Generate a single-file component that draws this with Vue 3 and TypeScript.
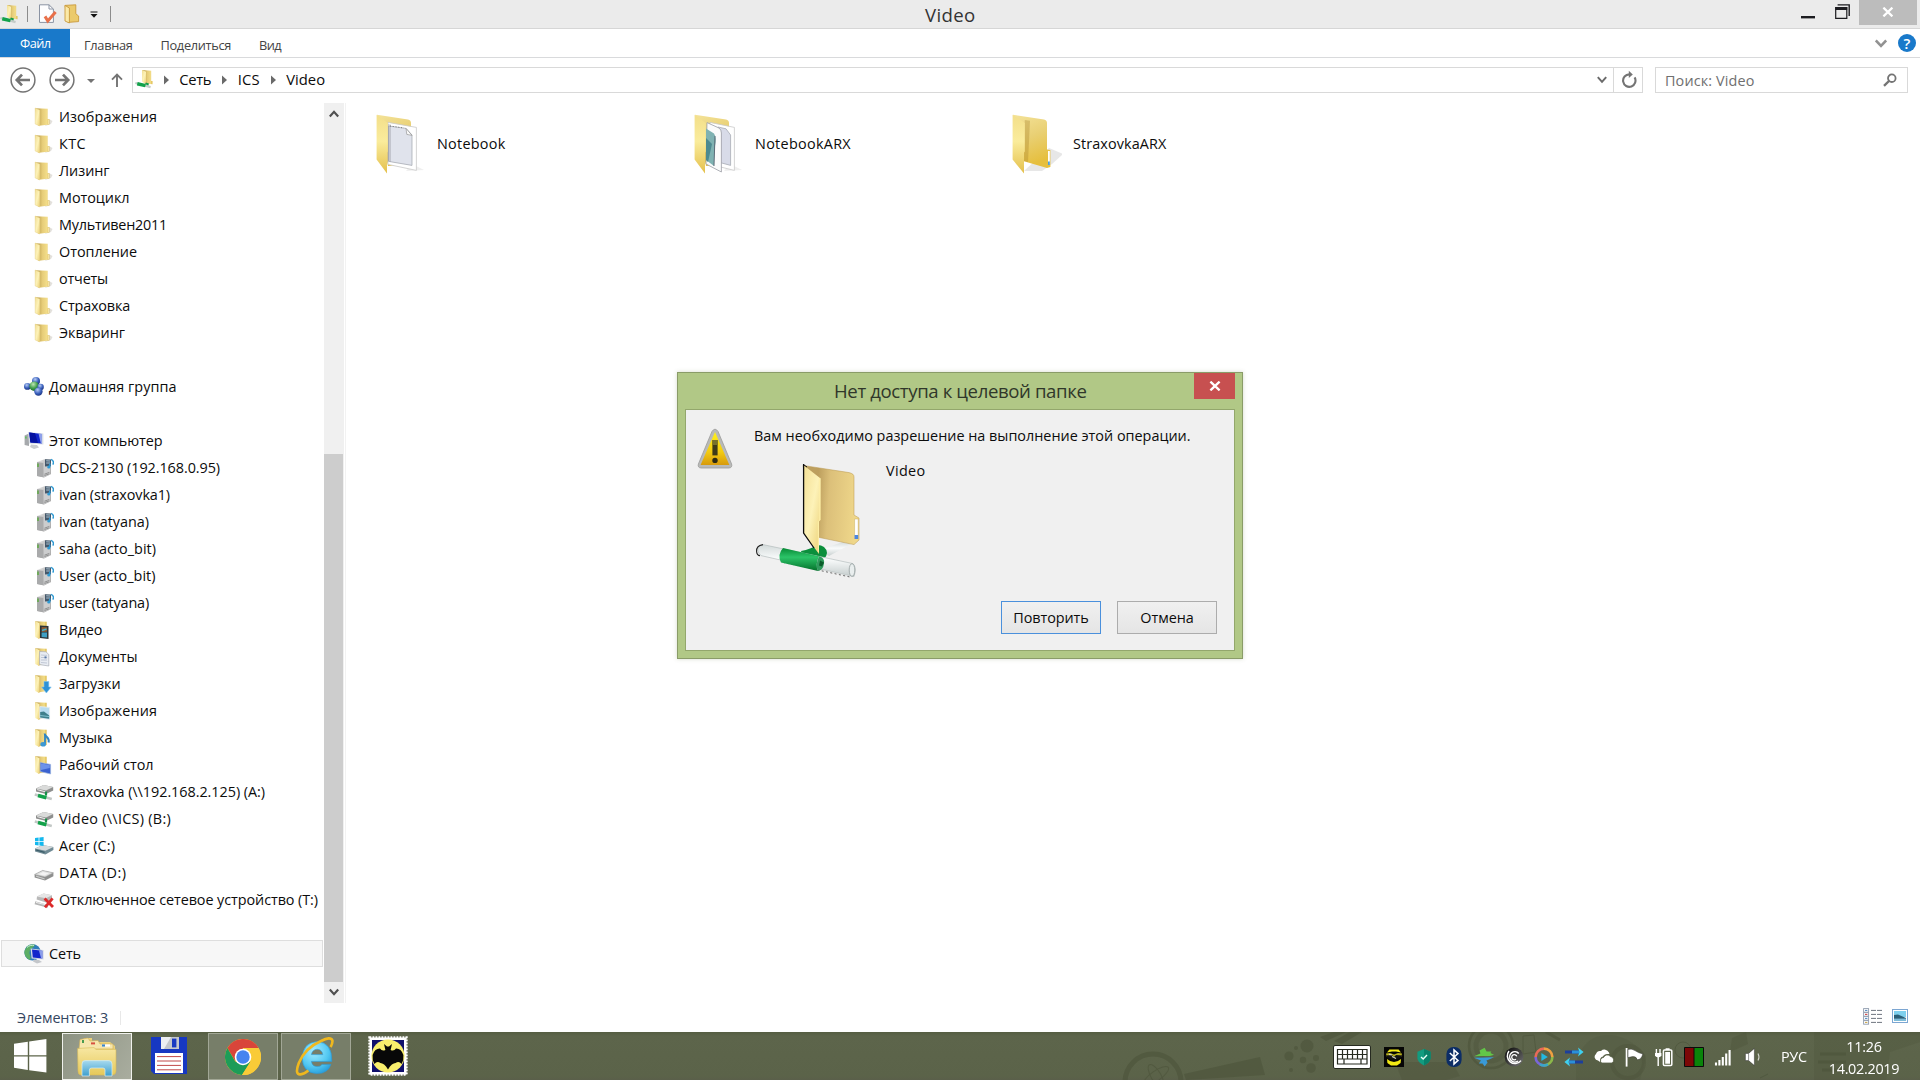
<script setup lang="ts">
import type { Directive } from 'vue'

interface Row {
  text: string
  w: number
  icon: string
  root?: boolean
  selected?: boolean
}

// Spreads the letters of a label so that it fills its designed width.
const vFit: Directive<HTMLElement, number> = {
  mounted(el, binding) {
    const natural = el.getBoundingClientRect().width
    const count = (el.textContent ?? '').length
    if (count) el.style.letterSpacing = `${(binding.value - natural) / count}px`
  },
}

const blank: Row = { text: '', w: 0, icon: '' }
const rows: Row[] = [
  { text: 'Изображения', w: 98, icon: 'folder' },
  { text: 'КТС', w: 27, icon: 'folder' },
  { text: 'Лизинг', w: 50.5, icon: 'folder' },
  { text: 'Мотоцикл', w: 70.5, icon: 'folder' },
  { text: 'Мультивен2011', w: 108, icon: 'folder' },
  { text: 'Отопление', w: 78, icon: 'folder' },
  { text: 'отчеты', w: 49, icon: 'folder' },
  { text: 'Страховка', w: 71, icon: 'folder' },
  { text: 'Экваринг', w: 66, icon: 'folder' },
  blank,
  { text: 'Домашняя группа', w: 127.5, icon: 'homegroup', root: true },
  blank,
  { text: 'Этот компьютер', w: 113.5, icon: 'computer', root: true },
  { text: 'DCS-2130 (192.168.0.95)', w: 161, icon: 'server' },
  { text: 'ivan (straxovka1)', w: 111, icon: 'server' },
  { text: 'ivan (tatyana)', w: 90, icon: 'server' },
  { text: 'saha (acto_bit)', w: 97, icon: 'server' },
  { text: 'User (acto_bit)', w: 96.5, icon: 'server' },
  { text: 'user (tatyana)', w: 90, icon: 'server' },
  { text: 'Видео', w: 43.5, icon: 'f-video' },
  { text: 'Документы', w: 78.5, icon: 'f-docs' },
  { text: 'Загрузки', w: 61.5, icon: 'f-down' },
  { text: 'Изображения', w: 98, icon: 'f-pics' },
  { text: 'Музыка', w: 53.5, icon: 'f-music' },
  { text: 'Рабочий стол', w: 94.5, icon: 'f-desk' },
  { text: 'Straxovka (\\\\192.168.2.125) (A:)', w: 206, icon: 'netdrive' },
  { text: 'Video (\\\\ICS) (B:)', w: 112, icon: 'netdrive' },
  { text: 'Acer (C:)', w: 56, icon: 'sysdrive' },
  { text: 'DATA (D:)', w: 67.5, icon: 'drive' },
  { text: 'Отключенное сетевое устройство (T:)', w: 259, icon: 'offdrive' },
  blank,
  { text: 'Сеть', w: 32, icon: 'network', root: true, selected: true },
]

const crumbs = [
  { text: 'Сеть', w: 32 },
  { text: 'ICS', w: 22 },
  { text: 'Video', w: 39 },
]

const folders = [
  { text: 'Notebook', w: 68.5, icon: 'big-notebook' },
  { text: 'NotebookARX', w: 96, icon: 'big-stack' },
  { text: 'StraxovkaARX', w: 93.5, icon: 'big-plain' },
]

const tray = ['t-bat', 't-shield', 't-bt', 't-bird', 't-spiral', 't-play', 't-sync', 't-cloud', 't-flag', 't-power', 't-meter', 't-signal', 't-sound']
</script>

<template>
  <div class="screen">
    <svg class="defs" aria-hidden="true">
      <defs>
        <linearGradient id="gFlap" x1="0" y1="0" x2="1" y2="1"><stop offset="0" stop-color="#f3df94" /><stop offset=".5" stop-color="#fdf2b8" /><stop offset="1" stop-color="#ecd074" /></linearGradient>
        <linearGradient id="gBack" x1="0" y1="0" x2="1" y2="0"><stop offset=".28" stop-color="#c9ac58" /><stop offset=".5" stop-color="#e6cc78" /><stop offset=".8" stop-color="#f2dc88" /><stop offset="1" stop-color="#dcb844" /></linearGradient>
        <linearGradient id="gBigBack" x1="0" y1="0" x2="1" y2=".1"><stop offset=".28" stop-color="#bd9f5e" /><stop offset=".5" stop-color="#dcc07a" /><stop offset="1" stop-color="#efd78a" /></linearGradient>
        <linearGradient id="gPlainBack" x1="0" y1="0" x2=".3" y2="1"><stop offset="0" stop-color="#f4e39a" /><stop offset=".5" stop-color="#e9d074" /><stop offset="1" stop-color="#e6bf3e" /></linearGradient>
        <linearGradient id="gBigFlap" x1="0" y1="0" x2="0" y2="1"><stop offset="0" stop-color="#f3df8a" /><stop offset=".45" stop-color="#faec9c" /><stop offset="1" stop-color="#e4c04c" /></linearGradient>
        <linearGradient id="gGrey" x1="0" y1="0" x2="1" y2="1"><stop offset="0" stop-color="#e8e8e8" /><stop offset="1" stop-color="#8f8f8f" /></linearGradient>
        <linearGradient id="gGreen" x1="0" y1="0" x2="0" y2="1"><stop offset="0" stop-color="#078a36" /><stop offset=".4" stop-color="#2cc468" /><stop offset="1" stop-color="#04702a" /></linearGradient>
        <linearGradient id="gGlass" x1="0" y1="0" x2="0" y2="1"><stop offset="0" stop-color="#d3dada" /><stop offset=".45" stop-color="#fafcfc" /><stop offset="1" stop-color="#c4cccc" /></linearGradient>
        <linearGradient id="gWarn" x1="0" y1="0" x2="0" y2="1"><stop offset="0" stop-color="#fff21a" /><stop offset=".6" stop-color="#f3cb12" /><stop offset="1" stop-color="#d79a0c" /></linearGradient>
        <linearGradient id="gFront" x1="0" y1="0" x2="0" y2="1"><stop offset="0" stop-color="#f7e7a2" /><stop offset="1" stop-color="#e6c95a" /></linearGradient>
        <linearGradient id="gTray" x1="0" y1="0" x2="0" y2="1"><stop offset="0" stop-color="#a6d9ee" /><stop offset="1" stop-color="#3d9fce" /></linearGradient>
        <radialGradient id="gIE" cx=".4" cy=".3" r=".8"><stop offset="0" stop-color="#a5ecff" /><stop offset=".6" stop-color="#52c8f2" /><stop offset="1" stop-color="#2093d4" /></radialGradient>
        <radialGradient id="gBlueBall" cx=".4" cy=".3" r=".7"><stop offset="0" stop-color="#b8ccf4" /><stop offset=".6" stop-color="#3c62be" /><stop offset="1" stop-color="#1c3684" /></radialGradient>
        <radialGradient id="gGreenBall" cx=".4" cy=".3" r=".7"><stop offset="0" stop-color="#bfe8b4" /><stop offset=".6" stop-color="#3f9c4a" /><stop offset="1" stop-color="#1f6a30" /></radialGradient>
        <linearGradient id="gDeep" x1="0" y1="0" x2="1" y2="1"><stop offset="0" stop-color="#060606" /><stop offset="1" stop-color="#777" /></linearGradient>
      </defs>

      <symbol id="folder" viewBox="0 0 20 20">
        <path d="M11 19 15 12 18.5 14 17 17Z" fill="#d5d3cc" opacity=".7" />
        <path d="M1.2 1.2 13.6 1.8V12.2H15.4V17.6L7 18.6H4Z" fill="url(#gBack)" />
        <path d="M1.2 1 5.8 3.2V19L1.2 17Z" fill="url(#gFlap)" stroke="#e6d28a" stroke-width=".5" />
        <path d="M14.3 12.8V17.2" stroke="#fff6d0" stroke-width=".8" />
      </symbol>
      <symbol id="f-video" viewBox="0 0 20 20">
        <path d="M1.2 1.2 12.6 1.8V17L4 18.6Z" fill="url(#gBack)" /><path d="M1.2 1 5.4 3.2V19L1.2 17Z" fill="url(#gFlap)" />
        <path d="M6 5.5 14.5 6V19L6 18Z" fill="#2c3438" /><path d="M7.6 7 13 7.2V11.8L7.6 12Z" fill="#8c5a34" /><path d="M7.6 12.6 13 12.6V17.6L7.6 17Z" fill="#3f9fc4" /><path d="M8 10.5 12.5 9" stroke="#48b0c8" stroke-width="1.4" />
      </symbol>
      <symbol id="f-docs" viewBox="0 0 20 20">
        <path d="M1.2 1.2 12.6 1.8V17L4 18.6Z" fill="url(#gBack)" /><path d="M1.2 1 5.4 3.2V19L1.2 17Z" fill="url(#gFlap)" />
        <path d="M5.6 4.5 12 4.8 14.8 7.5V19L5.6 17.6Z" fill="#e9edf3" stroke="#a9aeb8" stroke-width=".7" /><path d="M7 8 13 8.4M7 10.5H13M7 13H13M7 15.5 13 16" stroke="#a4acc0" stroke-width=".6" /><path d="M10.5 9.4H12.5V11.4H10.5Z" fill="#5878a8" />
      </symbol>
      <symbol id="f-down" viewBox="0 0 20 20">
        <path d="M1.2 1.2 12.6 1.8V17L4 18.6Z" fill="url(#gBack)" /><path d="M1.2 1 5.4 3.2V19L1.2 17Z" fill="url(#gFlap)" />
        <path d="M10 7.5H14.8V13H17.2L12.4 19 7.6 13H10Z" fill="#2f92d6" stroke="#7cc2ec" stroke-width=".6" />
      </symbol>
      <symbol id="f-pics" viewBox="0 0 20 20">
        <path d="M1.2 1.2 12.6 1.8V17L4 18.6Z" fill="url(#gBack)" /><path d="M1.2 1 5.4 3.2V19L1.2 17Z" fill="url(#gFlap)" />
        <path d="M5.8 5.6 15.6 6.4V18.4L5.8 17.2Z" fill="#b8dcf0" stroke="#e9eef2" stroke-width=".8" /><path d="M6.2 11 10 10.4 15.2 14.5V17.8L6.2 16.6Z" fill="#3f7f8c" /><path d="M6.2 14.5 15.2 15.6" stroke="#8fd0e0" stroke-width=".8" />
      </symbol>
      <symbol id="f-music" viewBox="0 0 20 20">
        <path d="M1.2 1.2 12.6 1.8V17L4 18.6Z" fill="url(#gBack)" /><path d="M1.2 1 5.4 3.2V19L1.2 17Z" fill="url(#gFlap)" />
        <path d="M10.6 5.5C11 9 16 9.5 14.6 14.5" fill="none" stroke="#2f86c4" stroke-width="2" /><path d="M11 6V16" stroke="#2f86c4" stroke-width="1.8" /><ellipse cx="9.2" cy="16.2" rx="2.8" ry="2.3" fill="#3c98d4" />
      </symbol>
      <symbol id="f-desk" viewBox="0 0 20 20">
        <path d="M1.2 1.2 12.6 1.8V17L4 18.6Z" fill="url(#gBack)" /><path d="M1.2 1 5.4 3.2V19L1.2 17Z" fill="url(#gFlap)" />
        <path d="M6.2 7.6 16.6 9.4V19L6.2 16.6Z" fill="#3b62d0" stroke="#9cb4e0" stroke-width=".7" /><path d="M7 8.6 15.8 10V13L7 15Z" fill="#6c92ea" />
      </symbol>
      <symbol id="homegroup" viewBox="0 0 20 20">
        <circle cx="12" cy="4" r="4" fill="url(#gBlueBall)" /><circle cx="3.4" cy="9.4" r="3.4" fill="url(#gBlueBall)" /><circle cx="10.2" cy="9.2" r="4.8" fill="url(#gGreenBall)" /><circle cx="16.6" cy="10" r="3.2" fill="url(#gBlueBall)" /><circle cx="14.4" cy="14.6" r="4.2" fill="url(#gBlueBall)" />
      </symbol>
      <symbol id="computer" viewBox="0 0 20 20">
        <path d="M.6 4.5 5 2.5V15L.6 14Z" fill="#a6a9ac" /><path d="M1.4 5.5H2.4V7.5H1.4Z" fill="#3c3" />
        <path d="M4 1 19.4 2.4V13.6L5 12.4Z" fill="#d7dde6" /><path d="M5.2 1.6 18 3V12.4L6.4 11.4Z" fill="#1226cc" /><path d="M5.2 1.6 11 2.2 14 12.1 6.4 11.4Z" fill="#0512a0" /><path d="M14.5 2.6 18 3V12.4L16.8 12.3Z" fill="#b8caf4" opacity=".75" /><path d="M7 13.6 13 14 15 16.6 10 18 6 16Z" fill="#c9ccd0" />
      </symbol>
      <symbol id="server" viewBox="0 0 20 20">
        <path d="M3 4 11 1 17 3V16L10 19.4 3 18Z" fill="url(#gGrey)" /><path d="M3 4 9.6 5V19.3L3 18Z" fill="#a9aaab" /><path d="M9.6 5 16.4 3.4V16.4L9.6 19.2Z" fill="#cccdce" />
        <path d="M4 5.6V9" stroke="#58a83a" stroke-width="1.4" /><path d="M10.4 16.2 15.4 14.4M10.4 17.6 15.4 15.8" stroke="#777" stroke-width=".7" />
        <path d="M11 1.2 17 1.6V8L11 8.4Z" fill="#46586a" /><path d="M12.2 2.8 16 3M12.2 5H16" stroke="#c7dfec" stroke-width=".8" /><path d="M16.8 1.4C20 2.4 19.8 5 18.8 6.6M15.8 5.4V9" fill="none" stroke="#2e9ad4" stroke-width="1.5" /><circle cx="14.8" cy="9" r="1.6" fill="#2e9ad4" />
      </symbol>
      <symbol id="drive" viewBox="0 0 20 20">
        <path d="M.6 11.4 8.6 7.4 19.4 9.8V13.2L11 17.6.6 14.4Z" fill="#8e8f8e" /><path d="M.6 11.4 8.6 7.4 19.4 9.8 11 14Z" fill="#dfe0df" stroke="#9c9d9c" stroke-width=".5" /><path d="M2 12.6 10.6 15.2V16.4L2 13.8Z" fill="#c9cac9" /><path d="M4.5 11.2 9 9 15 10.3 10.6 12.4Z" fill="#f4f4f4" />
      </symbol>
      <symbol id="netdrive" viewBox="0 0 20 20">
        <path d="M2 6.4 9.6 3 19.2 5V8.6L12 12 2 9.4Z" fill="#8e8f8e" /><path d="M2 6.4 9.6 3 19.2 5 12 8.6Z" fill="#dadbda" /><path d="M3.2 7.6 11.4 9.8" stroke="#f2f2f2" />
        <path d="M12 9.6V13.6" stroke="#189048" stroke-width="2.2" /><path d="M.8 12.4 17.8 17" stroke="#c3c8c6" stroke-width="2.6" /><path d="M4 13.6 12.4 15.8" stroke="#12a24a" stroke-width="3.6" />
      </symbol>
      <symbol id="sysdrive" viewBox="0 0 20 20">
        <path d="M1 12.6 8.6 9 19.4 11V14L11.4 18.4 1 15.6Z" fill="#6f8a94" /><path d="M1 12.6 8.6 9 19.4 11 11.4 14.8Z" fill="#d5dadc" /><path d="M2 14 10.6 16.4" stroke="#3a5c68" stroke-width="1.2" />
        <path d="M1 2 4.6 1.6V5.2H1ZM5.4 1.5 9.6 1V5.2H5.4ZM1 6H4.6V9.4L1 9ZM5.4 6H9.6V10L5.4 9.5Z" fill="#14b8ee" />
      </symbol>
      <symbol id="offdrive" viewBox="0 0 20 20">
        <path d="M3 6.4 9.6 3.6 18 5.2V10L12 12.4 2.6 9.6Z" fill="#b9b9b9" /><path d="M3 6.4 9.6 3.6 18 5.2 12 8.2Z" fill="#e6e6e6" /><path d="M1 12.8 14 16.4" stroke="#b5b5b5" stroke-width="3" /><path d="M2 12.4 11 14.6" stroke="#ededed" />
        <path d="M10.6 8.4 19 17M18.6 8.4 11 17.4" stroke="#dc2a2a" stroke-width="2.8" />
      </symbol>
      <symbol id="network" viewBox="0 0 20 20">
        <circle cx="8.6" cy="8.4" r="8.2" fill="#2f7cba" /><path d="M3 2.6C6 0 9 .4 11 .8 10 4 6 4 5.6 8 5 11 8 13 6 16 2 14.6-.4 10 .6 6.6Z" fill="#5cae64" /><path d="M3 3.4C5 1.4 8 1 10 1.4" stroke="#c9f0d8" fill="none" />
        <path d="M6.6 4.6 19.6 6V15.6L7.6 14.6Z" fill="#d4dae6" /><path d="M8 5.6 18.4 6.8V14.4L8.8 13.6Z" fill="#1226cc" /><path d="M15 6.4 18.4 6.8V14.4L17 14.2Z" fill="#a9bcf2" opacity=".8" /><path d="M10 15.6 15 16 18 18 13 19.6 9 17.6Z" fill="#c3c6ca" />
      </symbol>
      <symbol id="netfolder" viewBox="0 0 20 20">
        <path d="M7.4.6 17 1.2V12H18.4V15.6L10 14.6Z" fill="url(#gBack)" /><path d="M7.4.4 11.6 2.4V15.6L7.4 12.8Z" fill="url(#gFlap)" />
        <path d="M.4 14.2 16.4 18.6" stroke="#c4cbc8" stroke-width="2.4" /><path d="M2.4 15 11 17" stroke="#12a24a" stroke-width="3.6" /><path d="M11 14.6 14.4 15.8" stroke="#159a48" stroke-width="2" />
      </symbol>

      <symbol id="big-notebook" viewBox="0 0 50 60">
        <path d="M36 50 48 56 30 57Z" fill="#e4e4e4" opacity=".6" /><path d="M1 .8 32 5.4Q35 6 35 9V50L12 52Z" fill="url(#gPlainBack)" />
        <path d="M12 8.4 40.4 13.4V56.4L12 50.4Z" fill="#fff" stroke="#c9c9c9" stroke-width=".8" /><path d="M12.5 12 30 14.4 36 21V51.4L12.5 47.4Z" fill="#e0e3ec" stroke="#9fa3ac" stroke-width=".7" /><path d="M12 10 15 10.4V48L12 47Z" fill="#8c8c98" opacity=".35" /><path d="M30 14.4 30.8 20.4 36 21.4Z" fill="#fafafa" stroke="#888" stroke-width=".6" /><path d="M14 12 28 14" stroke="#777" stroke-dasharray="1 1.8" />
        <path d="M.6.8 11.8 9V37.4L11 38.6V59.4L.6 45.6Z" fill="url(#gBigFlap)" />
      </symbol>
      <symbol id="big-stack" viewBox="0 0 50 60">
        <path d="M36 50 48 56 30 57Z" fill="#e4e4e4" opacity=".6" /><path d="M1 .8 32 5.4Q35 6 35 9V50L12 52Z" fill="url(#gPlainBack)" />
        <path d="M16 8.4 40.4 13.4V56.4L16 50.4Z" fill="#fff" stroke="#c9c9c9" stroke-width=".8" /><path d="M24 13 32 14.8 36.6 21V51.4L24 48Z" fill="#d8dbe8" stroke="#9fa3ac" stroke-width=".7" />
        <path d="M13 8.6 25 14Q27.4 15.6 27.4 19V58L12 50Z" fill="#fbfbfb" stroke="#9a9da4" stroke-width=".8" /><path d="M12 14.4 20 19.4Q23 24 21 32L20 52 12 46Z" fill="#7fb2b2" /><path d="M12 24 18 30 14 48 12 46Z" fill="#4d8a90" /><path d="M21 22 20 52" stroke="#4b5664" stroke-width=".8" />
        <path d="M.6.8 11.8 9V37.4L11 38.6V59.4L.6 45.6Z" fill="url(#gBigFlap)" />
      </symbol>
      <symbol id="big-plain" viewBox="0 0 50 60">
        <path d="M37 34 51 40 40 50 30 57 12 57Z" fill="#cfcfcf" opacity=".5" /><path d="M1 .8 32 5.4Q35 6 35 9V35.4L38.4 36V53L35 54 11 47Z" fill="url(#gPlainBack)" /><path d="M12.8 6 18 6.8 16 48 12 47Z" fill="#a8842c" opacity=".35" />
        <path d="M36 37H37.8V50.6H36Z" fill="#fff" /><path d="M36 47.4H37.8V51H36Z" fill="#4c9fe0" />
        <path d="M.6.8 12.8 9V37.4L12 38.6V59.4L.6 45.6Z" fill="url(#gBigFlap)" />
      </symbol>

      <symbol id="t-bat" viewBox="0 0 20 20"><path d="M0 0H20V20H0Z" fill="#050505" /><path d="M5.4 2.4H14.6L17 5.4 12 4.6H8L3 5.4Z" fill="#f2ea14" /><path d="M3 12 6 14 10 15 14 14 17 12 16.6 16 13 18.6H7L3.4 16Z" fill="#f2ea14" /><path d="M2 6.6 6 6 10 7.4 14 6 18 6.6 17.4 10H2.6Z" fill="#b8b21c" /><path d="M1 8.4 8 8 10 10 12 8 19 8.4 16 11 12 12.6 8 12.6 4 11Z" fill="#111" /><path d="M8 9.6 12 11.4M5 7.4 8 8" stroke="#d5d5c8" stroke-width="1.1" /></symbol>
      <symbol id="t-shield" viewBox="0 0 20 20"><path d="M10 2 16.6 4.8V11.6Q15.6 16 10 18.4 4.4 16 3.4 11.6V4.8Z" fill="#129c80" /><path d="M10 2 16.6 4.8V11.6Q15.6 16 10 18.4Z" fill="#0a826a" /><path d="M7 10 9.2 12 13 8" fill="none" stroke="#e8fff8" stroke-width="1.4" /></symbol>
      <symbol id="t-bt" viewBox="0 0 20 20"><rect x="2.4" y="0" width="15.2" height="20" rx="7" fill="#0c2d66" /><path d="M5.8 6 14 13.4 10 17V3L14 6.6 5.8 14" fill="none" stroke="#fff" stroke-width="1.5" /></symbol>
      <symbol id="t-bird" viewBox="0 0 20 20"><path d="M0 9.2 6.4 6.6 5.6 3.6 10.6 .8 12.6 4.4 17.4 4.4 16.4 6 20 7.8 16 9Z" fill="#62c648" /><path d="M0 10.8 20 10.2 15 12.6 12.4 13.4 13.6 15.6 10.6 19.6 8.6 16.6 4.8 16.4 7 13.4Z" fill="#399ad8" /></symbol>
      <symbol id="t-spiral" viewBox="0 0 20 20"><circle cx="10" cy="10" r="9.4" fill="url(#gDeep)" /><path d="M5 4A7.6 7.6 0 1 0 17 13.6" fill="none" stroke="#fff" stroke-width="1.5" /><path d="M14.8 6.4A5.2 5.2 0 1 0 14 14" fill="none" stroke="#fff" stroke-width="1.5" /><path d="M12.8 9.4A2.6 2.6 0 1 0 12 12.2" fill="none" stroke="#fff" stroke-width="1.3" /></symbol>
      <symbol id="t-play" viewBox="0 0 20 20"><g fill="none" stroke-width="2.6"><path d="M10 1.6A8.4 8.4 0 0 1 18.4 10" stroke="#f0a040" /><path d="M18.4 10A8.4 8.4 0 0 1 10 18.4" stroke="#8cb84a" /><path d="M10 18.4A8.4 8.4 0 0 1 1.6 10" stroke="#7a66d8" /><path d="M1.6 10A8.4 8.4 0 0 1 10 1.6" stroke="#e86a58" /><path d="M14 17.4A8.4 8.4 0 0 1 6 17.4" stroke="#3aa6c8" /></g><path d="M7.4 6 13.8 10 7.4 14Z" fill="#22b8e0" /></symbol>
      <symbol id="t-sync" viewBox="0 0 20 20"><path d="M1 5H15" stroke="#1c3f9c" stroke-width="3" /><path d="M8 5H15" stroke="#2a90d8" stroke-width="3" /><path d="M14 .6 19.6 5 14 9.4 15.4 5Z" fill="#3fd0f0" /><path d="M5 15H19" stroke="#1c3f9c" stroke-width="3" /><path d="M5 15H11" stroke="#2a90d8" stroke-width="3" /><path d="M6 10.6.4 15 6 19.4 4.6 15Z" fill="#3fd0f0" /></symbol>
      <symbol id="t-cloud" viewBox="0 0 20 20"><path d="M4 13.4A3.6 3.6 0 0 1 2 7 4.4 4.4 0 0 1 7 4 5 5 0 0 1 15 5.4L15.4 7Q10 6.4 9 9.4 5.6 10 6 15Z" fill="#fff" /><path d="M7.6 16A3.2 3.2 0 0 1 9.6 10.4 4 4 0 0 1 16.4 9.4 3.6 3.6 0 0 1 18 16Z" fill="#fff" stroke="#5b6349" stroke-width=".8" /></symbol>
      <symbol id="t-flag" viewBox="0 0 20 20"><path d="M2.6 1V19.6" stroke="#fff" stroke-width="1.8" /><path d="M4 2.4Q8 1.4 11 3.6T18.8 7Q17.6 12.4 13.4 12.8 12 9 8.6 9.6L4 10.6Z" fill="#fff" stroke="#333" stroke-width=".5" /></symbol>
      <symbol id="t-power" viewBox="0 0 20 20"><path d="M2.4 2V6M6 2V6" stroke="#fff" stroke-width="1.4" /><path d="M1 6H7.4V8.6Q7 10.4 4.2 10.4 1.4 10.4 1 8.6Z" fill="#fff" /><path d="M4.2 10V19" stroke="#fff" stroke-width="1.4" /><rect x="9.4" y="3" width="8.4" height="15.6" rx="1" fill="none" stroke="#fff" stroke-width="1.5" /><path d="M11.2 5H16V16.8H11.2ZM11.6 1.2H15.6V3H11.6Z" fill="#fff" /></symbol>
      <symbol id="t-meter" viewBox="0 0 20 20"><path d="M.5.5H19.5V19.5H.5Z" fill="#7c0707" stroke="#0b0b0b" /><path d="M10 1H19V19H10Z" fill="#0a840a" /><path d="M10 1V19" stroke="#0b0b0b" /></symbol>
      <symbol id="t-signal" viewBox="0 0 20 20"><path d="M2 15.6V18.6M5.4 13V18.6M8.8 10V18.6M12.2 6.4V18.6M15.6 3V18.6" stroke="#fff" stroke-width="2.1" /></symbol>
      <symbol id="t-sound" viewBox="0 0 20 20"><path d="M1.4 6.4H4.6L10.4 1.4V18.6L4.6 13.6H1.4Z" fill="#fff" stroke="#333" stroke-width=".5" /><path d="M4.6 6.4V13.6" stroke="#666" stroke-width=".7" /><path d="M14 6.4Q16 10 14 13.6" fill="none" stroke="#d0d3ca" stroke-width="1.1" /></symbol>
    </svg>

    <header class="titlebar">
      <svg class="app-ico"><use href="#netfolder" /></svg>
      <i class="sep s1"></i>
      <svg class="doc-ico" viewBox="0 0 20 20"><path d="M1.5.8H11L15.4 5V18.4H1.5Z" fill="#fdfdfe" stroke="#8a93a3" /><path d="M11 .8V5H15.4" fill="none" stroke="#8a93a3" /><path d="M7 12.4 9.8 17 17.6 8" fill="none" stroke="#e8704a" stroke-width="3" /></svg>
      <svg class="new-ico" viewBox="0 0 16 20"><path d="M1 1.4 11.8.8V9.8L14.6 12V17.6L4 18.4Z" fill="#ebca6c" stroke="#c99a3c" stroke-width=".9" /><path d="M1 1.4 5.4 4V19L1 17Z" fill="#fbe9a8" stroke="#c99a3c" stroke-width=".9" /></svg>
      <svg class="qat-ico" viewBox="0 0 8 8"><path d="M.5 1H7.5" stroke="#111" /><path d="M.5 3H7.5L4 6.8Z" fill="#111" /></svg>
      <i class="sep s2"></i>
      <div class="win-title"><span v-fit="50.5">Video</span></div>
      <svg class="min" viewBox="0 0 14 3"><path d="M0 0H14V2.4H0Z" fill="#1c1c20" /></svg>
      <svg class="max" viewBox="0 0 15 15"><path d="M2.6 .9H14.2V12" fill="none" stroke="#1c1c20" stroke-width="1.4" /><path d="M.7 3.6H11.8V14.3H.7Z" fill="#ebebeb" stroke="#1c1c20" stroke-width="1.2" /><path d="M.4 3H12.2V6H.4Z" fill="#1c1c20" /></svg>
      <div class="win-close"><svg width="12" height="10" viewBox="0 0 12 10"><path d="M1.4.6 10.4 9.4M10.4.6 1.4 9.4" stroke="#fff" stroke-width="2.2" /></svg></div>
    </header>

    <nav class="tabs">
      <div class="file"><span v-fit="30.5">Файл</span></div>
      <span class="tab" v-fit="48.5">Главная</span>
      <span class="tab" v-fit="70.5">Поделиться</span>
      <span class="tab" v-fit="22">Вид</span>
      <svg class="ribbon-chev" viewBox="0 0 12 10"><path d="M.8 1.4 6 6.8 11.2 1.4" fill="none" stroke="#929292" stroke-width="2.6" /></svg>
      <div class="help">?</div>
    </nav>

    <div class="address">
      <svg class="round" viewBox="0 0 26 26"><circle cx="13" cy="13" r="11.9" fill="#fff" stroke="#747474" stroke-width="1.5" /><path d="M20 13H8M12 7.6 6.8 13 12 18.4" fill="none" stroke="#747474" stroke-width="2.7" /></svg>
      <svg class="round fwd" viewBox="0 0 26 26"><circle cx="13" cy="13" r="11.9" fill="#fff" stroke="#747474" stroke-width="1.5" /><path d="M6 13H18M14 7.6 19.2 13 14 18.4" fill="none" stroke="#747474" stroke-width="2.7" /></svg>
      <svg class="hist" viewBox="0 0 8 4"><path d="M0 0H8L4 4Z" fill="#747474" /></svg>
      <svg class="up" viewBox="0 0 12 14"><path d="M6 14V2M1 6.6 6 1.6 11 6.6" fill="none" stroke="#747474" stroke-width="1.9" /></svg>
      <div class="path">
        <svg class="path-ico"><use href="#netfolder" /></svg>
        <template v-for="c in crumbs" :key="c.text">
          <svg class="crumb-arrow" viewBox="0 0 5 10"><path d="M0 .4 5 5 0 9.6Z" fill="#6a6a6a" /></svg>
          <span class="crumb" v-fit="c.w">{{ c.text }}</span>
        </template>
        <svg class="path-chev" viewBox="0 0 10 8"><path d="M.8 1.2 5 5.8 9.2 1.2" fill="none" stroke="#6a6a6a" stroke-width="2" /></svg>
        <div class="refresh"><svg width="16" height="18" viewBox="0 0 16 18"><path d="M13.6 7.4A6.2 6.2 0 1 1 8.4 4.4" fill="none" stroke="#747474" stroke-width="2.1" /><path d="M7.8 .8 11.8 4.6 7.8 8Z" fill="#747474" /></svg></div>
      </div>
      <div class="search">
        <span v-fit="89.5">Поиск: Video</span>
        <svg width="14" height="14" viewBox="0 0 14 14"><circle cx="8.8" cy="5.2" r="3.8" fill="none" stroke="#747474" stroke-width="1.8" /><path d="M6 8 1 12.8" stroke="#747474" stroke-width="2.4" /></svg>
      </div>
    </div>

    <main class="main">
      <aside class="tree">
        <div v-for="(r, i) in rows" :key="i" class="row" :class="{ root: r.root, selected: r.selected }">
          <template v-if="r.text">
            <svg class="ico"><use :href="'#' + r.icon" /></svg>
            <span v-fit="r.w">{{ r.text }}</span>
          </template>
        </div>
      </aside>
      <div class="scroll">
        <svg class="sc-up" viewBox="0 0 10 8"><path d="M.8 6.4 5 1.8 9.2 6.4" fill="none" stroke="#505050" stroke-width="2.2" /></svg>
        <div class="thumb"></div>
        <svg class="sc-down" viewBox="0 0 10 8"><path d="M.8 1.6 5 6.2 9.2 1.6" fill="none" stroke="#505050" stroke-width="2.2" /></svg>
      </div>
      <section class="files">
        <div v-for="f in folders" :key="f.text" class="file-item">
          <svg class="big"><use :href="'#' + f.icon" /></svg>
          <span v-fit="f.w">{{ f.text }}</span>
        </div>
      </section>
    </main>

    <footer class="status">
      <span class="count" v-fit="91">Элементов: 3</span>
      <i class="split"></i>
      <svg class="v-list" viewBox="0 0 20 17"><g fill="#fff" stroke="#8f9cae" stroke-width=".9"><rect x=".6" y=".6" width="5" height="3.6" /><rect x=".6" y="4.6" width="5" height="3.6" /><rect x=".6" y="8.6" width="5" height="3.6" /><rect x=".6" y="12.6" width="5" height="3.6" /></g><path d="M2 6.4H4.4" stroke="#d05050" stroke-width="1.2" /><path d="M2 2.4H4.4M2 10.4H4.4" stroke="#4b86c0" /><path d="M2 14.4H4.4" stroke="#c9a040" /><path d="M8 2.4H19M8 6.4H19M8 10.4H19M8 14.4H19" stroke="#6f7680" stroke-dasharray="5 1" /></svg>
      <svg class="v-big" viewBox="0 0 16 14"><rect x=".5" y=".5" width="15" height="13" fill="#fff" stroke="#7ca6d2" /><path d="M2 2H14V8H2Z" fill="#7ed0ee" /><path d="M2 6 6 5.4 14 9V10H2Z" fill="#2b5f78" /><path d="M2 9.6H14V12H2Z" fill="#7ebcd8" /></svg>
    </footer>

    <div class="taskbar">
      <svg class="wall" viewBox="0 0 1920 48">
        <g fill="#4b5239" opacity=".55">
          <circle cx="1307" cy="14" r="6.5" /><circle cx="1289" cy="24" r="4.6" /><circle cx="1311" cy="36" r="4.8" /><circle cx="1303" cy="28" r="3.2" /><circle cx="1316" cy="26" r="3" /><circle cx="1291" cy="38" r="2" /><circle cx="1296" cy="16" r="2" />
          <path d="M1184 42 1260 25 1265 43 1186 48Z" /><path d="M1320 5 1334 0H1346L1326 9ZM1334 9 1350 0H1362L1342 12Z" />
          <path d="M1395 30H1452L1460 44 1446 48H1402Z" opacity=".6" /><path d="M1576 30Q1584 4 1606 3T1646 24L1640 48H1576Z" opacity=".4" /><path d="M1732 6 1746 0 1748 12 1730 20Z" opacity=".6" /><path d="M1814 0H1920V10L1890 20 1886 48H1814Z" opacity=".45" />
        </g>
        <g fill="none" stroke="#4b5239" opacity=".55">
          <circle cx="1153" cy="50" r="28" stroke-width="5" /><ellipse cx="1156" cy="44" rx="13" ry="5" transform="rotate(60 1156 44)" /><ellipse cx="1156" cy="44" rx="15" ry="5" transform="rotate(-35 1156 44)" />
          <circle cx="1491" cy="14" r="22" stroke-width="2.5" /><circle cx="1491" cy="14" r="15" stroke-width="5" opacity=".6" /><path d="M1523 4 1534 3 1536 20 1523 22Z" /><path d="M1546 0 1560 8" stroke-width="3" /><circle cx="1628" cy="30" r="16" stroke-width="4" opacity=".7" /><path d="M1820 22H1846M1818 30H1846M1822 38H1846" stroke-width="3" /><circle cx="1683" cy="18" r="8" /><path d="M1760 46 1768 42" />
        </g>
      </svg>
      <div class="start"><svg width="33" height="34" viewBox="0 0 33 34"><path d="M0 4.8 13.8 2.8V16.2H0ZM15.2 2.6 32.4 0V16.2H15.2ZM0 17.6H13.8V31L0 28.8ZM15.2 17.6H32.4V33.6L15.2 31.2Z" fill="#fff" /></svg></div>
      <div class="task active">
        <svg width="42" height="40" viewBox="0 0 42 40"><path d="M4 3 10 1H16V5H34L39 9V35H4Z" fill="#ecd27a" /><path d="M4 2.6 12 1 14 4 22 3.4 24 7H37V12H3Z" fill="#f6e6ac" stroke="#d0b058" stroke-width=".6" /><path d="M6 3H8V6H6Z" fill="#4a9c50" /><path d="M15 5.4H19V7.4H15Z" fill="#d85040" /><path d="M26 7.4H34V9.6H26Z" fill="#fff" /><path d="M26 7.4H29V9.6H26Z" fill="#3c86c8" /><path d="M1.6 11.4 18 10.6 20 12.4H40V34Q40 38 36 38H5Q2 38 2 34Z" fill="url(#gFront)" stroke="#d6ba58" stroke-width=".6" /><path d="M6 39V27Q6 23.6 9 23.6H33Q36 23.6 36 27V39H29V33Q29 31 27 31H15.4Q13.4 31 13.4 33V39Z" fill="url(#gTray)" stroke="#d7eef7" stroke-width=".7" /></svg>
      </div>
      <div class="plain">
        <svg width="36" height="37" viewBox="0 0 36 37"><path d="M0 0H36V37H3L0 34Z" fill="#1738c2" /><path d="M10 0H28V12H10Z" fill="#c3c6cc" /><path d="M10 0 20 0 13 12H10Z" fill="#eceef2" /><path d="M21 1.6H25.4V10.4H21Z" fill="#1738c2" /><path d="M4 16H32V36H4Z" fill="#fff" /><path d="M6 19.6H30M6 24H30M6 28.4H30M6 32.8H30" stroke="#c04848" stroke-width="1" /></svg>
      </div>
      <div class="task chrome">
        <svg width="36" height="36" viewBox="0 0 36 36"><circle cx="18" cy="18" r="18" fill="#f7c62f" /><path d="M2.4 9A18 18 0 0 1 33.6 9L18 10.2 10.2 22Z" fill="#d9453a" /><path d="M2.4 9A18 18 0 0 0 17 36L25.6 22.5 18 26 10.2 22.5Z" fill="#1d9c58" /><path d="M33.6 9H18V18L25.6 22.4 17 36A18 18 0 0 0 33.6 9Z" fill="#f9cb38" /><circle cx="18" cy="18" r="8.3" fill="#fff" /><circle cx="18" cy="18" r="6.7" fill="#4584ef" /></svg>
      </div>
      <div class="task ie">
        <svg width="40" height="40" viewBox="0 0 40 40"><path d="M36.8 24.4H16.4Q17.4 29.6 22.2 29.6 25.6 29.6 27 27.4H36Q32.6 36.6 22.2 36.6 7.6 36 7.2 21 7.8 5.6 22.2 4.6 37.4 5.6 36.8 24.4ZM16.4 17.6H27.8Q27 12.4 22.2 12.2 17.4 12.4 16.4 17.6Z" fill="url(#gIE)" stroke="#2a9ad8" stroke-width=".6" /><path d="M26 4Q35.6-1 37.4 3.4 37.8 6 35.6 10M26 4Q10 11 3.8 26-.6 38 5.6 37.4 9 37 13.4 33.4" fill="none" stroke="#f0b81e" stroke-width="2.6" /></svg>
      </div>
      <div class="plain bat">
        <svg width="40" height="40" viewBox="0 0 40 40"><rect x="1.5" y="1.5" width="37" height="37" fill="#fff" stroke="#fff" stroke-width="2.4" stroke-dasharray="1.8 1.2" /><path d="M4 4H36V36H4Z" fill="#10106c" /><circle cx="20" cy="20" r="16.6" fill="#f8ee6c" /><path d="M4.6 19Q7 12.4 12 12.6 14 15.6 17.4 14L16 8 19 10.6H21L24 8 22.6 14Q26 15.6 28 12.6 33 12.4 35.4 19 36 24 33.6 28 31 24.8 27.6 27 24 27 20 33.4 16 27 12.4 27 9 24.8 6.4 28 4 24 4.6 19Z" fill="#080808" /></svg>
      </div>
      <div class="tray">
        <svg class="kbd" viewBox="0 0 38 24"><rect x=".5" y=".5" width="37" height="23" rx="1.5" fill="#fff" stroke="#262a20" /><path d="M4.5 4.5H34V19H4.5ZM4.5 9.5H34M4.5 14H34M9.5 4.5V14M14.5 4.5V14M19.5 4.5V14M24.5 4.5V14M29.5 4.5V14M11 14V19M28 14V19" fill="none" stroke="#262a20" stroke-width="1.2" /></svg>
        <div v-for="t in tray" :key="t" class="cell"><svg width="20" height="20"><use :href="'#' + t" /></svg></div>
        <span class="lang" v-fit="27">РУС</span>
        <div class="clock"><span v-fit="35.5">11:26</span><span v-fit="70.5">14.02.2019</span></div>
      </div>
    </div>

    <div class="dialog">
      <div class="dlg-head">
        <span class="dlg-title" v-fit="252.5">Нет доступа к целевой папке</span>
        <div class="dlg-close"><svg width="12" height="10" viewBox="0 0 12 10"><path d="M1.4.6 10.6 9.4M10.6.6 1.4 9.4" stroke="#fff" stroke-width="2.3" /></svg></div>
      </div>
      <div class="dlg-body">
        <svg class="warn" viewBox="0 0 36 42"><path d="M15 3.4Q18-1 21 3.4L34.6 36Q35.6 39.6 32 40H4Q.4 39.6 1.4 36Z" fill="#b9bab8" stroke="#9a9b99" stroke-width=".8" /><path d="M18 4 32.4 37H3.6Z" fill="url(#gWarn)" /><path d="M15.4 12H20.6V27.4H15.4Z" fill="#3e3a18" /><path d="M15.8 12H20.2V17H15.8Z" fill="#77702c" /><circle cx="18" cy="32.4" r="2.7" fill="#2c2a14" /></svg>
        <div class="dlg-main">
          <p><span v-fit="436.5">Вам необходимо разрешение на выполнение этой операции.</span></p>
          <div class="dlg-item">
            <svg class="share" viewBox="0 0 106 116">
              <path d="M64 86 88 78 96 80 74 92Z" fill="url(#gGlass)" opacity=".9" />
              <path d="M46 87Q56 85 62 81 71 81 72 89 71 96 64 97L48 93Z" fill="#0b8f3c" />
              <path d="M48 1.4 94 8.6Q99 9.6 99 13V51L104 54V76L99 80.6 62 73Z" fill="url(#gBigBack)" stroke="#b8974c" stroke-width=".5" />
              <path d="M99.6 55H103.2V74.4H99.6Z" fill="#fff" stroke="#bda04c" stroke-width=".4" /><path d="M99.6 71H103.2V75H99.6Z" fill="#4c86e0" />
              <g transform="translate(0 .6)">
                <path d="M8 80 98 99Q102 103 99 112L6 91Q.8 86 4 81Z" fill="url(#gGlass)" stroke="#b6bebe" stroke-width=".7" />
                <path d="M8 80Q1 81 1.6 87 2 91 5 91" fill="none" stroke="#222" stroke-width="1.1" /><ellipse cx="97" cy="105.4" rx="2.8" ry="6.4" fill="#e9eeee" stroke="#8a9494" stroke-width=".7" />
                <path d="M28 97.8 96 112.6" stroke="#444" stroke-width=".8" stroke-dasharray="2 2.4" />
                <path d="M28 83.4 64 91.6Q60 100 63 106.4L26 98Q22 90 28 83.4Z" fill="url(#gGreen)" /><path d="M64 91.6Q70 93 69 99 68 106 63 106.4 60 100 64 91.6Z" fill="#2f9a5c" /><path d="M65 96 69 98 67 102 64 101Z" fill="#0b5c2a" />
              </g>
              <path d="M48.4 1 65.6 14.6V56L64 57.4V90L48.4 69Z" fill="url(#gFlap)" /><path d="M64.8 14V56L63.4 57.4V88" fill="none" stroke="#fff0a8" stroke-width="1" />
              <path d="M48.6 0V69L59 84" fill="none" stroke="#0c0c0c" stroke-width="1.3" /><path d="M48.4.6 52 3" stroke="#0c0c0c" stroke-width="1" />
            </svg>
            <span class="item-name" v-fit="39.5">Video</span>
          </div>
          <div class="buttons">
            <div class="btn primary"><span v-fit="75.5">Повторить</span></div>
            <div class="btn"><span v-fit="53.5">Отмена</span></div>
          </div>
        </div>
      </div>
    </div>
  </div>
</template>

<style>
html, body { margin: 0; overflow: hidden; }
</style>

<style scoped>
.screen { position: relative; width: 1920px; height: 1080px; overflow: hidden; display: flex; flex-direction: column; background: #fff; color: #0c0c0c; font: 14.4px/20px "Open Sans", "Noto Sans", sans-serif; white-space: pre; }
.screen * { box-sizing: border-box; }
.defs { position: absolute; width: 0; height: 0; }
svg { display: block; flex: none; }
span { display: inline-block; flex: none; }

.titlebar { display: flex; height: 29px; flex: none; background: #ebebeb; border-bottom: 1px solid #d6d6d6; align-items: flex-start; }
.app-ico { width: 19px; height: 20px; margin: 4px 0 0; }
.sep { width: 1px; height: 16px; margin-top: 6px; background: #8c8c8c; flex: none; }
.s1 { margin-left: 8px; }
.doc-ico { width: 20px; height: 20px; margin: 4px 0 0 10px; }
.new-ico { width: 16px; height: 20px; margin: 4px 0 0 6px; }
.qat-ico { width: 8px; height: 8px; margin: 11px 0 0 10px; }
.s2 { margin-left: 12px; }
.win-title { flex: 1; height: 28px; padding: 1px 0 0 814px; font-size: 18.6px; line-height: 28px; color: #333; }
.min { width: 14px; height: 3px; margin: 16px 20px 0 0; }
.max { width: 15px; height: 15px; margin: 4px 9px 0 0; }
.win-close { width: 58px; height: 25px; margin-right: 3px; padding: 0 1px 2px 0; background: #bcbcbc; display: flex; align-items: center; justify-content: center; }

.tabs { display: flex; height: 29px; flex: none; border-bottom: 1px solid #d9dadc; font-size: 12.8px; color: #444; }
.file { width: 70px; height: 28px; background: #1979ca; color: #fff; line-height: 29px; padding-left: 20px; margin-right: 14px; }
.tab { line-height: 32px; height: 28px; }
.tab + .tab { margin-left: 28px; }
.ribbon-chev { width: 12px; height: 10px; margin: 10px 11px 0 auto; }
.help { width: 18px; height: 18px; margin: 5px 4px 0 0; border-radius: 50%; background: #1979ca; color: #fff; text-align: center; line-height: 18px; font-weight: 600; font-size: 15px; }

.address { display: flex; height: 45px; flex: none; padding: 9px 12px 0 10px; align-items: flex-start; }
.round { width: 26px; height: 26px; }
.fwd { margin-left: 12.5px; }
.hist { width: 8px; height: 4px; margin: 12px 0 0 12px; }
.up { width: 12px; height: 14px; margin: 6px 0 0 16.5px; }
.path { display: flex; align-items: center; width: 1511px; height: 26px; margin-left: 9px; border: 1px solid #d9d9d9; font-size: 14.8px; flex: none; }
.path-ico { width: 19px; height: 20px; margin: 0 10px 2px 2px; }
.crumb-arrow { width: 5px; height: 10px; margin: 0; }
.crumb { margin: -2px 11.3px 0 10.2px; }
.path-chev { width: 10px; height: 8px; margin: 0 6px 0 auto; }
.refresh { width: 29px; height: 24px; border-left: 1px solid #d9d9d9; display: flex; align-items: center; justify-content: center; padding: 0 0 2px 2px; }
.search { display: flex; align-items: center; justify-content: space-between; width: 253px; height: 26px; margin-left: 12px; padding: 1px 10px 0 9px; border: 1px solid #d9d9d9; color: #6f6f6f; font-size: 14.4px; flex: none; }
.search svg { margin-top: -2px; }

.main { display: flex; height: 900px; flex: none; }
.tree { width: 324px; }
.row { display: flex; align-items: center; height: 27px; padding-left: 34px; }
.ico { width: 20px; height: 20px; margin-right: 5px; }
.row.root { padding-left: 24px; }
.row.selected { width: 322px; margin-left: 1px; padding-left: 22px; background: #f7f7f7; border: 1px solid #dedede; }
.scroll { display: flex; flex-direction: column; width: 20px; height: 900px; background: #f0f0f0; margin-right: 1px; flex: none; }
.sc-up { width: 10px; height: 8px; margin: 7px 0 0 4.5px; }
.thumb { width: 19px; height: 528px; margin-top: 336px; background: #cdcdcd; }
.sc-down { width: 10px; height: 8px; margin: 6px 0 0 4.5px; }
.files { display: flex; flex: 1; align-items: flex-start; padding: 11px 0 0 30px; border-left: 1px solid #f2f2f2; }
.file-item { display: flex; align-items: center; width: 318px; height: 60px; }
.big { width: 50px; height: 60px; margin-right: 11px; }

.status { display: flex; height: 29px; flex: none; padding-left: 17px; color: #34465f; }
.count { line-height: 30px; }
.split { width: 1px; height: 14px; margin: 8px 0 0 12px; background: #e8e8e8; }
.v-list { width: 20px; height: 17px; margin: 5px 9px 0 auto; }
.v-big { width: 16px; height: 14px; margin: 6px 12px 0 0; }

.taskbar { position: relative; display: flex; height: 48px; flex: none; background: linear-gradient(#555d42, #5d654b 4px, #5b6349 44px, #5a5f4a); }
.wall { position: absolute; left: 0; top: 0; width: 1920px; height: 48px; }
.start { width: 62px; padding: 7px 0 0 14px; position: relative; }
.task { position: relative; display: flex; align-items: center; justify-content: center; width: 70px; height: 47px; margin-top: 1px; margin-right: 3px; border: 1px solid #a2a796; background: #777e69; }
.task.active { border-color: #f0f1ec; background: linear-gradient(120deg, #8d9382, #a9ad9f); margin-right: 0; padding-right: 1px; }
.task.chrome { padding-right: 1px; }
.task.ie { padding-right: 3px; }
.plain { position: relative; width: 76px; padding: 5px 0 0 19px; }
.plain.bat { width: 58px; padding: 4px 0 0 14px; }
.tray { position: relative; display: flex; align-items: center; margin-left: auto; color: #fff; padding-top: 2px; }
.kbd { width: 38px; height: 24px; margin-right: 8px; }
.cell { width: 30px; display: flex; justify-content: center; padding-right: 1px; }
.lang { margin-left: 12px; width: 28px; }
.clock { display: flex; flex-direction: column; align-items: center; width: 74px; margin: 1px 19px 0 18px; }
.clock span { line-height: 22px; }

.dialog { position: absolute; left: 677px; top: 372px; width: 566px; height: 287px; background: #b1c886; border: 1px solid #8a9c68; box-shadow: 0 0 4px rgba(90, 110, 50, .25); padding: 0 7px; }
.dlg-head { display: flex; height: 36px; padding-left: 149px; justify-content: space-between; }
.dlg-title { font-size: 18.6px; line-height: 36px; color: #30372a; }
.dlg-close { width: 41px; height: 26px; background: #c75050; display: flex; align-items: center; justify-content: center; padding-bottom: 1px; }
.dlg-body { display: flex; height: 242px; border: 1px solid #93a76c; background: #f0f0f0; }
.warn { width: 36px; height: 42px; margin: 18px 0 0 11px; }
.dlg-main { flex: 1; padding-left: 21px; }
.dlg-main p { margin: 16px 0 0; height: 20px; }
.dlg-item { display: flex; height: 116px; margin-top: 17px; padding-left: 1px; }
.share { width: 106px; height: 116px; margin-top: 1px; }
.item-name { margin: -2px 0 0 25px; }
.buttons { display: flex; justify-content: flex-end; gap: 16px; margin: 22px 17px 0 0; }
.btn { width: 100px; height: 33px; display: flex; align-items: center; justify-content: center; border: 1px solid #acacac; background: linear-gradient(#f0f0f0, #e5e5e5); }
.btn.primary { border-color: #4a90dc; }
</style>
